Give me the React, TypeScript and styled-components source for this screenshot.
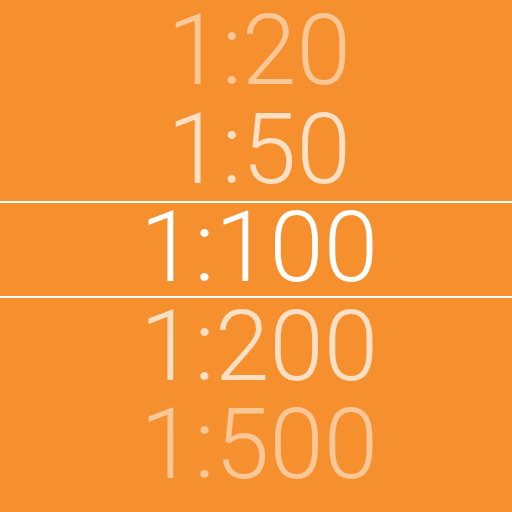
import styled, { createGlobalStyle } from "styled-components";

const GlobalStyle = createGlobalStyle`
  html, body {
    margin: 0;
    padding: 0;
    background: #f68f2e;
  }
`;

const Picker = styled.div`
  position: relative;
  width: 512px;
  height: 512px;
  overflow: hidden;
  background: #f68f2e;
  display: flex;
  flex-direction: column;
  padding-top: 2px;
  box-sizing: border-box;
`;

const Row = styled.div<{ $fade: number }>`
  height: 98.5px;
  flex: none;
  display: flex;
  align-items: center;
  justify-content: center;
  padding-left: 6px;
  font-family: Roboto, "Liberation Sans", sans-serif;
  font-weight: 300;
  font-size: 98px;
  line-height: 80px;
  color: rgba(255, 255, 255, ${(p) => p.$fade});
`;

const SelectionBand = styled.div`
  position: absolute;
  left: 0;
  right: 0;
  top: 201px;
  height: 93px;
  border-top: 2px solid #fff;
  border-bottom: 2px solid #fff;
  pointer-events: none;
`;

const scales = [
  { label: "1:20", fade: 0.5 },
  { label: "1:50", fade: 0.72 },
  { label: "1:100", fade: 1 },
  { label: "1:200", fade: 0.72 },
  { label: "1:500", fade: 0.5 },
];

export default function App() {
  return (
    <>
      <GlobalStyle />
      <Picker>
        {scales.map((s) => (
          <Row key={s.label} $fade={s.fade}>
            {s.label}
          </Row>
        ))}
        <SelectionBand />
      </Picker>
    </>
  );
}
